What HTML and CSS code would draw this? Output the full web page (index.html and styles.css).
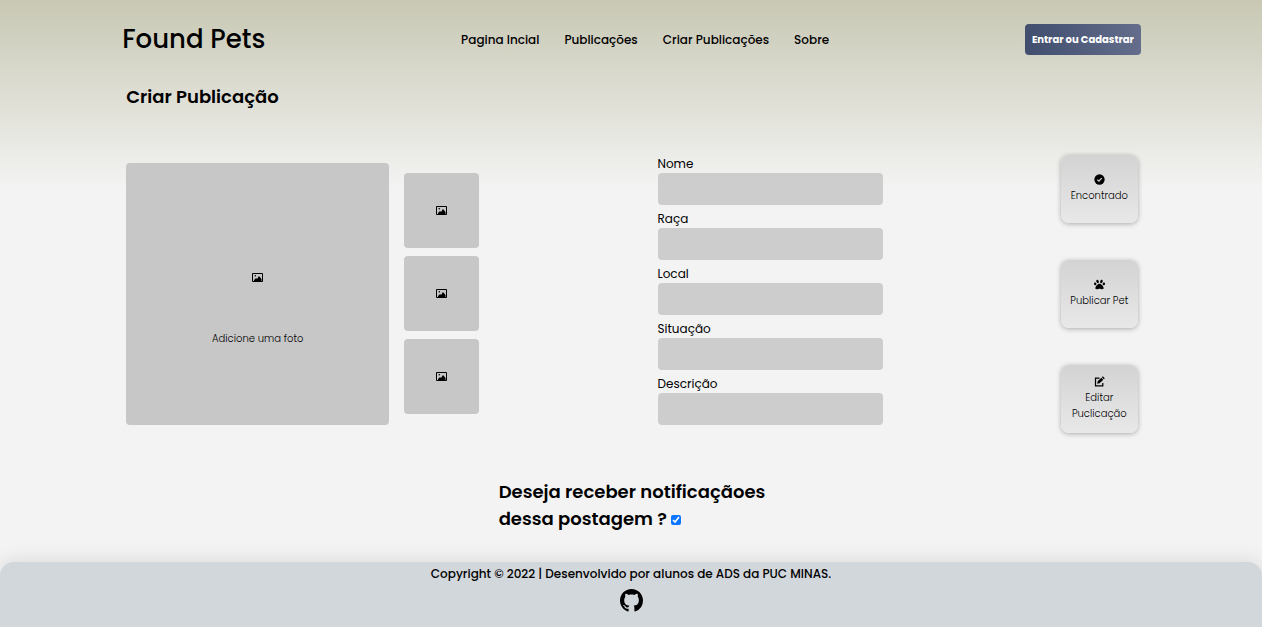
FILE: index.html
```html
<!DOCTYPE html>
<html lang="pt-BR">
<head>
<meta charset="utf-8">
<meta name="viewport" content="width=device-width, initial-scale=1">
<title>Found Pets</title>
<link rel="stylesheet" href="styles.css">
</head>
<body>
<svg class="sprite" aria-hidden="true">
  <symbol id="image" viewBox="0 0 11 11"><path fill="none" stroke="currentColor" d="M.5 1.500h10v8h-10z"/><path d="M2 9V8l2-2 1 1 2-3 2.500 3v2z"/><circle cx="3.300" cy="3.700" r=".8"/></symbol>
  <symbol id="check" viewBox="0 0 16 16"><circle cx="8" cy="8" r="7.500"/><path d="M4.800 8.200l2.300 2.300 4.100-4.400" fill="none" stroke="#d6d6d6" stroke-width="1.800"/></symbol>
  <symbol id="paw" viewBox="0 0 512 512"><path d="M256 224c-79 0-192 123-192 200 0 35 27 56 71 56 49 0 81-25 121-25 41 0 73 25 121 25 44 0 71-21 71-56 0-77-113-200-192-200zM109 211c-10-35-43-56-73-47s-45 45-35 80 43 56 73 47 45-45 35-80zm84-19c31-8 43-51 28-95s-52-73-82-65-43 51-28 95 52 73 82 65zm283-28c-30-9-63 12-73 47s5 71 35 80 63-12 73-47-5-71-35-80zm-157 28c31 8 67-21 82-65s3-87-28-95-67 21-82 65-3 87 28 95z"/></symbol>
  <symbol id="edit" viewBox="0 0 16 16"><path d="M8 3.200H2.200v11.300h10.600V10" fill="none" stroke="currentColor" stroke-width="1.800"/><path d="M12.800 0.300l2.900 2.900-1.400 1.400-2.900-2.900zM10.600 2.500l2.900 2.900-5.300 5.300-3.500.6.600-3.500z"/></symbol>
  <symbol id="github" viewBox="0 0 16 16"><path d="M8 0C3.580 0 0 3.580 0 8c0 3.540 2.290 6.530 5.470 7.590.4.070.55-.17.55-.38 0-.19-.01-.82-.01-1.490-2.010.37-2.530-.49-2.690-.94-.09-.23-.48-.94-.82-1.130-.28-.15-.68-.52-.01-.53.63-.01 1.080.58 1.230.82.72 1.210 1.870.87 2.330.66.07-.52.28-.87.51-1.070-1.780-.2-3.640-.89-3.640-3.950 0-.87.31-1.590.82-2.150-.08-.2-.36-1.020.08-2.120 0 0 .67-.21 2.200.82.64-.18 1.320-.27 2-.27s1.360.09 2 .27c1.530-1.040 2.200-.82 2.200-.82.44 1.100.16 1.920.08 2.120.51.56.82 1.270.82 2.150 0 3.070-1.870 3.750-3.650 3.950.29.25.54.73.54 1.480 0 1.070-.01 1.930-.01 2.200 0 .21.15.46.55.38A8.010 8.010 0 0 0 16 8c0-4.420-3.580-8-8-8z"/></symbol>
</svg>

<header class="header">
  <a class="brand" href="#">Found Pets</a>
  <nav class="nav" aria-label="Principal">
    <a href="#">Pagina Incial</a>
    <a href="#">Publicações</a>
    <a href="#">Criar Publicações</a>
    <a href="#">Sobre</a>
  </nav>
  <button class="login" type="button">Entrar ou Cadastrar</button>
</header>

<main class="main">
  <h1 class="title">Criar Publicação</h1>
  <div class="editor">
    <div class="photos">
      <button class="photo" type="button">
        <svg class="icon"><use href="#image"/></svg>
        <span>Adicione uma foto</span>
      </button>
      <div class="thumbs">
        <button class="thumb" type="button" aria-label="Foto 2"><svg class="icon"><use href="#image"/></svg></button>
        <button class="thumb" type="button" aria-label="Foto 3"><svg class="icon"><use href="#image"/></svg></button>
        <button class="thumb" type="button" aria-label="Foto 4"><svg class="icon"><use href="#image"/></svg></button>
      </div>
    </div>
    <form class="form">
      <label for="nome">Nome</label><input id="nome" type="text">
      <label for="raca">Raça</label><input id="raca" type="text">
      <label for="local">Local</label><input id="local" type="text">
      <label for="situacao">Situação</label><input id="situacao" type="text">
      <label for="descricao">Descrição</label><input id="descricao" type="text">
    </form>
    <div class="actions">
      <button class="action" type="button"><svg class="icon"><use href="#check"/></svg>Encontrado</button>
      <button class="action" type="button"><svg class="icon"><use href="#paw"/></svg>Publicar Pet</button>
      <button class="action" type="button"><svg class="icon"><use href="#edit"/></svg>Editar Puclicação</button>
    </div>
  </div>
  <div class="notify">
    <label for="notify">Deseja receber notificaçãoes<br>dessa postagem ?</label>
    <input id="notify" type="checkbox" checked>
  </div>
</main>

<footer class="footer">
  <p>Copyright © 2022 | Desenvolvido por alunos de ADS da PUC MINAS.</p>
  <a href="#" aria-label="GitHub"><svg class="github"><use href="#github"/></svg></a>
</footer>
</body>
</html>
```
FILE: styles.css
```css
* { box-sizing: border-box; margin: 0; padding: 0; }

body {
  min-height: 100vh;
  display: flex;
  flex-direction: column;
  background: linear-gradient(#c8c8b4, #f3f3f3 30%) #f3f3f3;
  color: #000;
  font-family: Poppins, Inter, sans-serif;
  font-size: 12px;
}

a { color: inherit; text-decoration: none; }
button { font: inherit; color: inherit; border: 0; cursor: pointer; }
.sprite { position: absolute; width: 0; height: 0; }
.icon { width: 11px; height: 11px; fill: currentColor; }

.header {
  display: flex;
  justify-content: space-between;
  align-items: center;
  height: 79px;
  padding: 0 calc(10% - 5px) 0 calc(10% - 4px);
}
.brand { font-size: 26px; font-weight: 500; }
.nav { display: flex; gap: 25px; font-weight: 500; }
.login {
  height: 31px;
  padding: 0 7px;
  border-radius: 4px;
  background: linear-gradient(to right, #414e6e, #646d8c);
  color: #fff;
  font-size: 10px;
  font-weight: 700;
}

.main { flex: 1; padding: 4px calc(10% - 2px) 30px 10%; }
.title { font-size: 18px; font-weight: 600; line-height: 27px; }

.editor {
  display: flex;
  justify-content: space-between;
  align-items: center;
  margin-top: 44px;
}
.photos { display: flex; align-items: center; gap: 15px; }
.photo, .thumb {
  display: flex;
  align-items: center;
  justify-content: center;
  border-radius: 4px;
  background: #c7c7c7;
}
.photo {
  flex-direction: column;
  gap: 48px;
  width: 263px;
  height: 262px;
  padding-top: 31px;
  font-size: 10px;
  font-weight: 300;
}
.thumbs { display: grid; gap: 8px; }
.thumb { width: 75px; height: 75px; }

.form { display: flex; flex-direction: column; width: 225px; padding-bottom: 4px; }
.form label { line-height: 19px; }
.form input {
  height: 32px;
  margin-bottom: 4px;
  padding: 0 8px;
  border: 0;
  border-radius: 4px;
  background: #cdcdcd;
  font: inherit;
}

.actions { display: grid; gap: 37px; }
.action {
  display: flex;
  flex-direction: column;
  align-items: center;
  justify-content: center;
  width: 77px;
  height: 68px;
  border-radius: 8px;
  background: linear-gradient(#d3d3d3, #e8e8e8);
  box-shadow: 0 1px 5px rgba(0, 0, 0, 0.3);
  font-size: 10px;
  font-weight: 300;
  line-height: 16px;
}
.action .icon { margin-bottom: 3px; }

.notify {
  width: fit-content;
  margin: 45px auto 0;
  font-size: 18px;
  font-weight: 600;
  line-height: 27px;
}
.notify input { width: 10px; height: 10px; accent-color: #0d75ff; }

.footer {
  display: flex;
  flex-direction: column;
  align-items: center;
  gap: 3px;
  height: 65px;
  padding-top: 3px;
  border-radius: 14px 14px 0 0;
  background: #d2d7db;
  box-shadow: 0 0 20px rgba(0, 0, 0, 0.12);
  font-weight: 500;
  line-height: 18px;
}
.github { display: block; width: 23px; height: 23px; margin-top: 3px; }
```
